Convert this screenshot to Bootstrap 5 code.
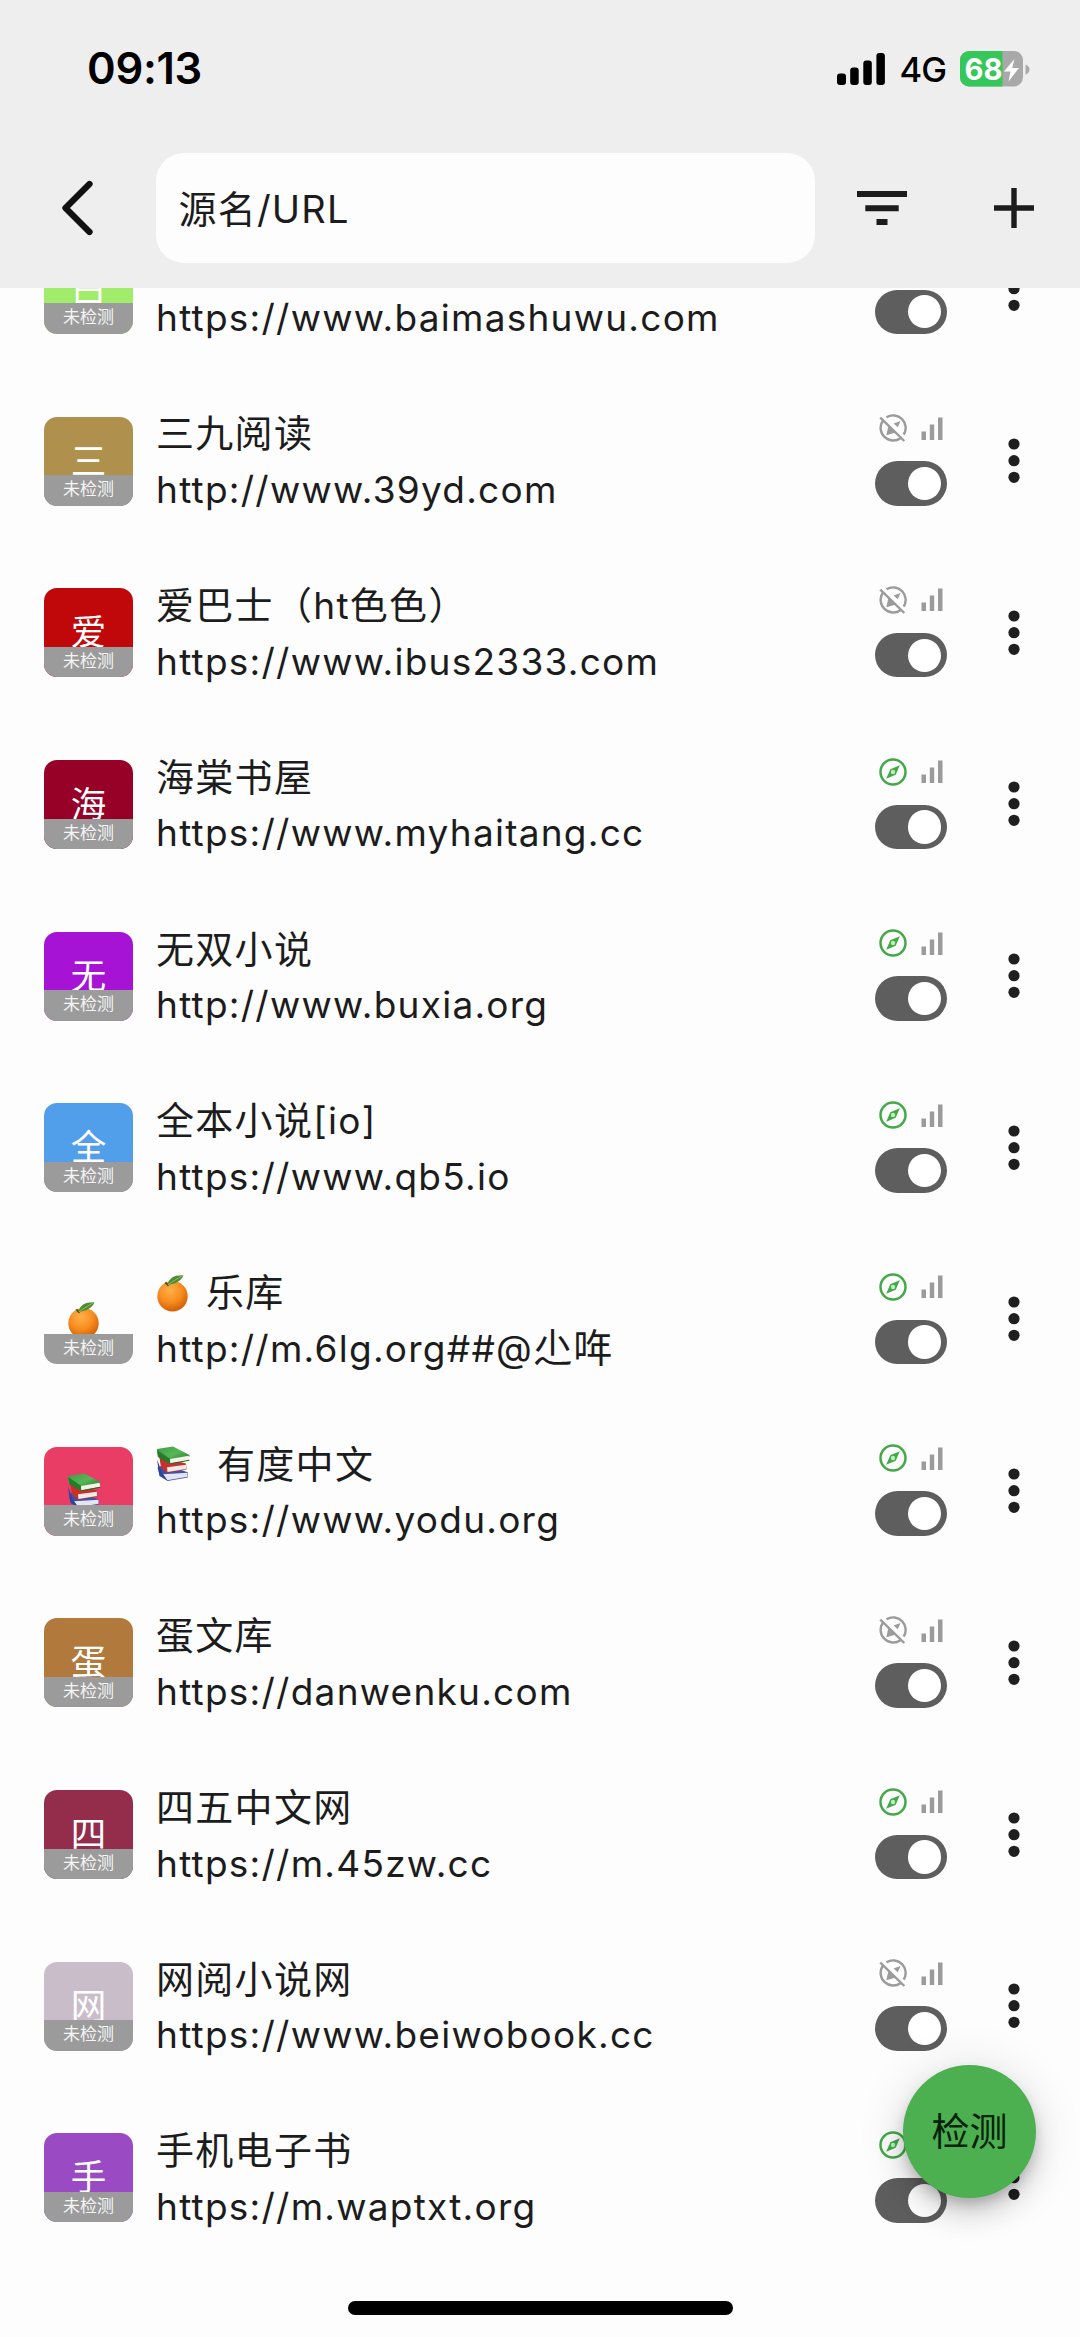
<!DOCTYPE html>
<html lang="zh-CN">
<head>
<meta charset="utf-8">
<meta name="viewport" content="width=device-width, initial-scale=1">
<title>书源管理</title>
<link href="https://cdn.jsdelivr.net/npm/bootstrap@5.3.0/dist/css/bootstrap.min.css" rel="stylesheet">
<style>
body{width:1080px;height:2337px;background:#fdfdfd;color:#1c1c1c;font-family:Inter,"Noto Sans CJK SC",sans-serif;overflow:hidden}
svg{display:block;flex:none}
.top-area{height:288px;background:#eee}
.status-bar{height:138px;padding:0 50px 0 87px}
.clock{font-size:43.5px;font-weight:600;line-height:1;color:#000;letter-spacing:-.3px}
.net{font-size:34.5px;font-weight:500;line-height:1;color:#000;letter-spacing:-1px;margin:2px 14px 0 14px}
.tool-bar{height:139px;padding-left:60px}
.search-box{width:659px;height:110px;border-radius:28px;background:#fdfdfd;font-size:38px;letter-spacing:1.2px;padding:3px 0 0 23px;margin-left:61.5px}
.filter-icon{margin-left:42px}
.plus-icon{margin-left:87.5px}
.source-list{height:2049px;overflow:hidden}
.source-list ul{margin-top:-84.5px}
.source-row{height:171.7px;padding-left:44px}
.tile{width:89px;height:89px;border-radius:13px;color:#fff;font-size:35.5px;line-height:89px}
.tile.clear-bg{background:#fdfdfd}
.tile .glyph{padding-left:23px;padding-top:26px}
.tile-state{height:30.4px;line-height:29px;font-size:17px;background:#9b9b9b;color:#f4f4f4}
.copy{width:742px;padding:2px 0 0 23px}
.source-name{height:55.6px;line-height:55.6px;font-size:38px;letter-spacing:1.3px}
.source-url{height:55.6px;line-height:55.6px;font-size:37px;letter-spacing:1.25px}
.latin{font-size:37px}
.han{font-size:39px}
.orange-gap{margin-right:16px}
.books-gap{margin-right:27px}
.controls{width:72px;padding-bottom:2px}
.switch{width:72px;height:44.5px;border-radius:23px;background:#5e5e5e;padding:5.6px;margin-top:19px}
.knob{width:33.3px;height:33.3px;border-radius:50%;background:#fff}
.dots{margin-left:60.5px}
.fab{right:44px;top:2065px;width:133px;height:133px;border-radius:50%;background:#4caf50;color:#07210a;font-size:38px;box-shadow:0 8px 14px -3px rgba(0,0,0,.22),0 17px 28px rgba(0,0,0,.13),0 3px 50px rgba(0,0,0,.12)}
.home-line{left:348px;top:2301px;width:385px;height:14px;background:#000}
</style>
<script src="https://cdn.jsdelivr.net/npm/bootstrap@5.3.0/dist/js/bootstrap.bundle.min.js"></script>
</head>
<body class="position-relative">
<svg width="0" height="0" class="position-absolute">
<defs>
<radialGradient id="peel" cx=".42" cy=".3" r=".72"><stop offset="0" stop-color="#ffb14a"/><stop offset=".55" stop-color="#f78c1e"/><stop offset="1" stop-color="#cf5c05"/></radialGradient>
<linearGradient id="cover" x1="0" y1="0" x2="1" y2="1"><stop offset="0" stop-color="#3f9b42"/><stop offset=".5" stop-color="#57b656"/><stop offset="1" stop-color="#1f7127"/></linearGradient>
<symbol id="orange" viewBox="0 0 34 38"><circle cx="16.5" cy="22.3" r="15.2" fill="url(#peel)"/><path d="M12 12.5 8.500 9l1.600-1.200 3 3.200z" fill="#3f5d22"/><path d="M11.500 11C13 3.500 18.500.8 27.500 1.200 25.500 7 19.500 9.700 11.500 11z" fill="#4e8b35"/><path d="M12 10.700C17 7.500 21 4.500 27 1.500" stroke="#9cc267" stroke-width=".9" fill="none"/></symbol>
<symbol id="books" viewBox="0 0 34 36"><path d="M1.500 21.500 10 18l22 8.500-.3 5L11.500 35 3.500 29z" fill="#3f51a5"/><path d="M7 28.200 31.500 26.800v4L11.300 34.300z" fill="#e3e6f1"/><path d="M3.500 12 6 11l24 6.500.5 6-19.500 3.200L5 21.500z" fill="#c92f2b"/><path d="M11 21.300 30 18.800v4.300l-18.500 2.800z" fill="#f2eae4"/><path d="M1 3 17 .6 33.500 9v1.500L14.500 16 1.500 10.500z" fill="url(#cover)"/><path d="M14 13 32.700 9.800l.5 4L14.300 17.500z" fill="#f4f3e8"/><path d="M1 4 14 12.700V18L2.500 11.500z" fill="#267b2c"/><path d="M14.200 17.800 33.300 14.200" stroke="#1c6a25" stroke-width="1.100"/><path d="M1 13.500 6.500 27.500 11.500 34.700 3.500 30z" fill="#30449b"/></symbol>
<symbol id="compass" viewBox="0 0 28 28"><circle cx="14" cy="14" r="12.500" fill="none" stroke="#43a948" stroke-width="2.500"/><path d="M20.800 7.200 16.700 16.700 7.200 20.800 11.300 11.300z" fill="#43a948"/><circle cx="14" cy="14" r="2.200" fill="#b9efb9"/></symbol>
<symbol id="compass-off" viewBox="0 0 28 28"><g fill="none" stroke="#9b9b9b" stroke-width="2.400"><path d="M7.500 3.200A12.600 12.600 0 0 1 24.700 20.700M21.500 24.200A12.600 12.600 0 0 1 3.700 7"/><path d="M1.300 3.700 25.300 27"/></g><path d="M21.500 7 18.800 13.200 14.600 9.600zM9.500 11.500 17 18.400 7.300 21.300z" fill="#9b9b9b"/></symbol>
<symbol id="bars" viewBox="0 0 22 23"><path d="M.5 14.500H5V23H.5zM8.800 7.500h4.400V23H8.800zM17 .5h4.500V23H17z" fill="#9b9b9b"/></symbol>
<symbol id="kebab" viewBox="0 0 12 46"><g fill="#1f1f1f"><circle cx="6" cy="6" r="5.600"/><circle cx="6" cy="22.700" r="5.600"/><circle cx="6" cy="39.300" r="5.600"/></g></symbol>
</defs>
</svg>

<header class="top-area">
  <div class="status-bar d-flex align-items-center">
    <div class="clock me-auto">09:13</div>
    <svg width="49" height="32" viewBox="0 0 49 32"><rect x="0" y="20.500" width="9" height="11.500" rx="3"/><rect x="13.200" y="14.500" width="8.500" height="17.500" rx="3"/><rect x="26.300" y="7.500" width="8.500" height="24.500" rx="3"/><rect x="39.400" y="0" width="8.500" height="32" rx="3"/></svg>
    <div class="net">4G</div>
    <svg width="70" height="36" viewBox="0 0 70 36"><defs><clipPath id="cell"><rect width="63" height="35.500" rx="9"/></clipPath></defs><g clip-path="url(#cell)"><rect width="63" height="36" fill="#a9a9a9"/><rect width="42.500" height="36" fill="#35c759"/></g><path d="M65.500 13.500q4 1.500 4 5t-4 5z" fill="#a9a9a9"/><text x="4.500" y="29" font-size="30.500" font-weight="700" fill="#fff" textLength="38" lengthAdjust="spacingAndGlyphs">68</text><path d="M54.500 8 44 20.500h6.500L48.500 30.500 59 17h-6.800z" fill="#fff"/></svg>
  </div>
  <div class="tool-bar d-flex align-items-center">
    <svg width="34" height="56" viewBox="0 0 34 56"><path d="M29.500 4 5.500 28l24 24" fill="none" stroke="#111" stroke-width="6.300" stroke-linecap="round" stroke-linejoin="round"/></svg>
    <div class="search-box d-flex align-items-center">源名/URL</div>
    <svg class="filter-icon" width="50" height="34" viewBox="0 0 50 34"><path d="M0 0h50v6H0zM8.300 14.200h33.400v6H8.300zM19.500 28h11v6h-11z" fill="#1c1c1c"/></svg>
    <svg class="plus-icon" width="40" height="40" viewBox="0 0 40 40"><path d="M17.300 0h5.400v17.300H40v5.400H22.700V40h-5.400V22.700H0v-5.400h17.300z" fill="#1c1c1c"/></svg>
  </div>
</header>

<main class="source-list">
<ul class="list-unstyled mb-0">
<li class="source-row d-flex align-items-center"><div class="tile position-relative overflow-hidden text-center" style="background:#a2ec6c">白<div class="tile-state position-absolute bottom-0 w-100">未检测</div></div><div class="copy"><div class="source-name"></div><div class="source-url">https://www.baimashuwu.com</div></div><div class="controls"><div class="d-flex align-items-center px-1 justify-content-between"><svg width="28" height="28"><use href="#compass"/></svg><svg width="22" height="23"><use href="#bars"/></svg></div><div class="switch d-flex justify-content-end"><div class="knob"></div></div></div><svg class="dots" width="12" height="46"><use href="#kebab"/></svg></li>
<li class="source-row d-flex align-items-center"><div class="tile position-relative overflow-hidden text-center" style="background:#b0904d">三<div class="tile-state position-absolute bottom-0 w-100">未检测</div></div><div class="copy"><div class="source-name">三九阅读</div><div class="source-url">http://www.39yd.com</div></div><div class="controls"><div class="d-flex align-items-center px-1 justify-content-between"><svg width="28" height="28"><use href="#compass-off"/></svg><svg width="22" height="23"><use href="#bars"/></svg></div><div class="switch d-flex justify-content-end"><div class="knob"></div></div></div><svg class="dots" width="12" height="46"><use href="#kebab"/></svg></li>
<li class="source-row d-flex align-items-center"><div class="tile position-relative overflow-hidden text-center" style="background:#c0080b">爱<div class="tile-state position-absolute bottom-0 w-100">未检测</div></div><div class="copy"><div class="source-name">爱巴士（<span class="latin">ht</span>色色）</div><div class="source-url">https://www.ibus2333.com</div></div><div class="controls"><div class="d-flex align-items-center px-1 justify-content-between"><svg width="28" height="28"><use href="#compass-off"/></svg><svg width="22" height="23"><use href="#bars"/></svg></div><div class="switch d-flex justify-content-end"><div class="knob"></div></div></div><svg class="dots" width="12" height="46"><use href="#kebab"/></svg></li>
<li class="source-row d-flex align-items-center"><div class="tile position-relative overflow-hidden text-center" style="background:#970027">海<div class="tile-state position-absolute bottom-0 w-100">未检测</div></div><div class="copy"><div class="source-name">海棠书屋</div><div class="source-url">https://www.myhaitang.cc</div></div><div class="controls"><div class="d-flex align-items-center px-1 justify-content-between"><svg width="28" height="28"><use href="#compass"/></svg><svg width="22" height="23"><use href="#bars"/></svg></div><div class="switch d-flex justify-content-end"><div class="knob"></div></div></div><svg class="dots" width="12" height="46"><use href="#kebab"/></svg></li>
<li class="source-row d-flex align-items-center"><div class="tile position-relative overflow-hidden text-center" style="background:#a613d4">无<div class="tile-state position-absolute bottom-0 w-100">未检测</div></div><div class="copy"><div class="source-name">无双小说</div><div class="source-url">http://www.buxia.org</div></div><div class="controls"><div class="d-flex align-items-center px-1 justify-content-between"><svg width="28" height="28"><use href="#compass"/></svg><svg width="22" height="23"><use href="#bars"/></svg></div><div class="switch d-flex justify-content-end"><div class="knob"></div></div></div><svg class="dots" width="12" height="46"><use href="#kebab"/></svg></li>
<li class="source-row d-flex align-items-center"><div class="tile position-relative overflow-hidden text-center" style="background:#519eeb">全<div class="tile-state position-absolute bottom-0 w-100">未检测</div></div><div class="copy"><div class="source-name">全本小说<span class="latin">[io]</span></div><div class="source-url">https://www.qb5.io</div></div><div class="controls"><div class="d-flex align-items-center px-1 justify-content-between"><svg width="28" height="28"><use href="#compass"/></svg><svg width="22" height="23"><use href="#bars"/></svg></div><div class="switch d-flex justify-content-end"><div class="knob"></div></div></div><svg class="dots" width="12" height="46"><use href="#kebab"/></svg></li>
<li class="source-row d-flex align-items-center"><div class="tile clear-bg position-relative overflow-hidden"><div class="glyph"><svg width="34" height="38"><use href="#orange"/></svg></div><div class="tile-state position-absolute bottom-0 w-100 text-center">未检测</div></div><div class="copy"><div class="source-name d-flex align-items-center"><svg class="orange-gap" width="34" height="38"><use href="#orange"/></svg>乐库</div><div class="source-url">http://m.6lg.org##@<span class="han">尐哖</span></div></div><div class="controls"><div class="d-flex align-items-center px-1 justify-content-between"><svg width="28" height="28"><use href="#compass"/></svg><svg width="22" height="23"><use href="#bars"/></svg></div><div class="switch d-flex justify-content-end"><div class="knob"></div></div></div><svg class="dots" width="12" height="46"><use href="#kebab"/></svg></li>
<li class="source-row d-flex align-items-center"><div class="tile position-relative overflow-hidden" style="background:#ea3d66"><div class="glyph"><svg width="34" height="36"><use href="#books"/></svg></div><div class="tile-state position-absolute bottom-0 w-100 text-center">未检测</div></div><div class="copy"><div class="source-name d-flex align-items-center"><svg class="books-gap" width="34" height="36"><use href="#books"/></svg>有度中文</div><div class="source-url">https://www.yodu.org</div></div><div class="controls"><div class="d-flex align-items-center px-1 justify-content-between"><svg width="28" height="28"><use href="#compass"/></svg><svg width="22" height="23"><use href="#bars"/></svg></div><div class="switch d-flex justify-content-end"><div class="knob"></div></div></div><svg class="dots" width="12" height="46"><use href="#kebab"/></svg></li>
<li class="source-row d-flex align-items-center"><div class="tile position-relative overflow-hidden text-center" style="background:#b17a3c">蛋<div class="tile-state position-absolute bottom-0 w-100">未检测</div></div><div class="copy"><div class="source-name">蛋文库</div><div class="source-url">https://danwenku.com</div></div><div class="controls"><div class="d-flex align-items-center px-1 justify-content-between"><svg width="28" height="28"><use href="#compass-off"/></svg><svg width="22" height="23"><use href="#bars"/></svg></div><div class="switch d-flex justify-content-end"><div class="knob"></div></div></div><svg class="dots" width="12" height="46"><use href="#kebab"/></svg></li>
<li class="source-row d-flex align-items-center"><div class="tile position-relative overflow-hidden text-center" style="background:#942d4c">四<div class="tile-state position-absolute bottom-0 w-100">未检测</div></div><div class="copy"><div class="source-name">四五中文网</div><div class="source-url">https://m.45zw.cc</div></div><div class="controls"><div class="d-flex align-items-center px-1 justify-content-between"><svg width="28" height="28"><use href="#compass"/></svg><svg width="22" height="23"><use href="#bars"/></svg></div><div class="switch d-flex justify-content-end"><div class="knob"></div></div></div><svg class="dots" width="12" height="46"><use href="#kebab"/></svg></li>
<li class="source-row d-flex align-items-center"><div class="tile position-relative overflow-hidden text-center" style="background:#cabdca">网<div class="tile-state position-absolute bottom-0 w-100">未检测</div></div><div class="copy"><div class="source-name">网阅小说网</div><div class="source-url">https://www.beiwobook.cc</div></div><div class="controls"><div class="d-flex align-items-center px-1 justify-content-between"><svg width="28" height="28"><use href="#compass-off"/></svg><svg width="22" height="23"><use href="#bars"/></svg></div><div class="switch d-flex justify-content-end"><div class="knob"></div></div></div><svg class="dots" width="12" height="46"><use href="#kebab"/></svg></li>
<li class="source-row d-flex align-items-center"><div class="tile position-relative overflow-hidden text-center" style="background:#9a4bc3">手<div class="tile-state position-absolute bottom-0 w-100">未检测</div></div><div class="copy"><div class="source-name">手机电子书</div><div class="source-url">https://m.waptxt.org</div></div><div class="controls"><div class="d-flex align-items-center px-1 justify-content-between"><svg width="28" height="28"><use href="#compass"/></svg><svg width="22" height="23"><use href="#bars"/></svg></div><div class="switch d-flex justify-content-end"><div class="knob"></div></div></div><svg class="dots" width="12" height="46"><use href="#kebab"/></svg></li>
</ul>
</main>

<div class="fab position-absolute d-flex align-items-center justify-content-center">检测</div>
<div class="home-line position-absolute rounded-pill"></div>
</body>
</html>
